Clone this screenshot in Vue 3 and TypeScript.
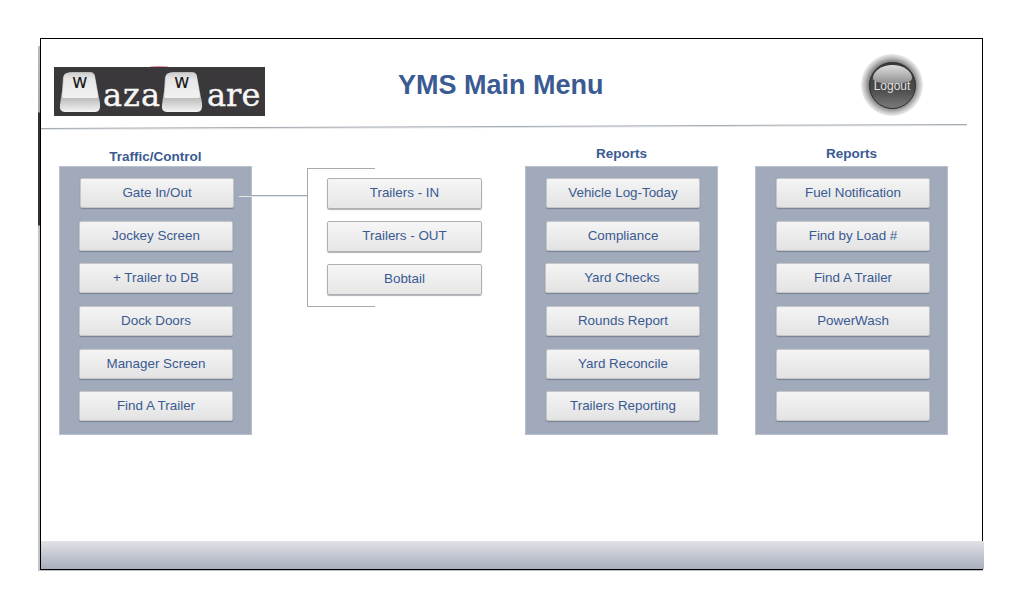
<script setup lang="ts">
const trafficControl: string[] = ['Gate In/Out', 'Jockey Screen', '+ Trailer to DB', 'Dock Doors', 'Manager Screen', 'Find A Trailer']
const gate: string[] = ['Trailers - IN', 'Trailers - OUT', 'Bobtail']
const reportsA: string[] = ['Vehicle Log-Today', 'Compliance', 'Yard Checks', 'Rounds Report', 'Yard Reconcile', 'Trailers Reporting']
const reportsB: string[] = ['Fuel Notification', 'Find by Load #', 'Find A Trailer', 'PowerWash', '', '']
</script>

<template>
  <div class="page">
    <div class="frame">
      <header class="header">
        <div class="logo">
          <svg class="key" viewBox="0 0 42 40" width="42" height="40">
            <defs>
              <linearGradient id="keyTop" x1="0" y1="0" x2="0" y2="1">
                <stop offset="0" stop-color="#cfcfcf" />
                <stop offset="0.25" stop-color="#e6e6e6" />
                <stop offset="1" stop-color="#f2f2f2" />
              </linearGradient>
              <linearGradient id="keyBase" x1="0" y1="0" x2="0" y2="1">
                <stop offset="0" stop-color="#bdbdbd" />
                <stop offset="0.6" stop-color="#b4b4b4" />
                <stop offset="1" stop-color="#f4f4f4" />
              </linearGradient>
            </defs>
            <path d="M8 1Q9 0 13 0H31Q35 0 36 4L41 31Q42 40 36 40H6Q0 40 1 33Q2 25 3 19L4 5Q5 2 8 1Z" fill="url(#keyBase)" />
            <path d="M9 1H32Q35 1 35.500 4L39 24Q39 26 36 26H6Q3 26 3.200 24L5 4Q5.500 1 9 1Z" fill="url(#keyTop)" />
            <text x="13" y="16" class="key-letter">w</text>
          </svg>
          <span class="logo-text first">aza</span>
          <svg class="key" viewBox="0 0 42 40" width="42" height="40">
            <path d="M8 1Q9 0 13 0H31Q35 0 36 4L41 31Q42 40 36 40H6Q0 40 1 33Q2 25 3 19L4 5Q5 2 8 1Z" fill="url(#keyBase)" />
            <path d="M9 1H32Q35 1 35.500 4L39 24Q39 26 36 26H6Q3 26 3.200 24L5 4Q5.500 1 9 1Z" fill="url(#keyTop)" />
            <text x="13" y="16" class="key-letter">w</text>
          </svg>
          <span class="logo-text second">are</span>
        </div>
        <h1 class="title">YMS Main Menu</h1>
        <button class="logout">
          <span class="logout-face"><span class="logout-label">Logout</span></span>
        </button>
      </header>
      <div class="rule"></div>

      <main class="columns">
        <section class="col col-traffic">
          <h2 class="col-title">Traffic/Control</h2>
          <div class="panel">
            <button v-for="b in trafficControl" :key="b" class="btn">{{ b }}</button>
          </div>
        </section>

        <section class="connector">
          <div class="stem"></div>
          <div class="bracket">
            <button v-for="b in gate" :key="b" class="btn sub">{{ b }}</button>
          </div>
        </section>

        <section class="col col-a">
          <h2 class="col-title">Reports</h2>
          <div class="panel">
            <button v-for="b in reportsA" :key="b" class="btn">{{ b }}</button>
          </div>
        </section>

        <section class="col col-b">
          <h2 class="col-title">Reports</h2>
          <div class="panel">
            <button v-for="(b, i) in reportsB" :key="i" class="btn">{{ b }}</button>
          </div>
        </section>
      </main>

      <footer class="footer"></footer>
    </div>
  </div>
</template>

<style>
html, body { margin: 0; background: #fff; }
</style>

<style scoped>
.page {
  width: 1022px;
  height: 599px;
  padding: 38px 0 0 40px;
  box-sizing: border-box;
  overflow: hidden;
  font-family: "Liberation Sans", Arial, sans-serif;
}
.frame {
  position: relative;
  width: 943px;
  height: 532px;
  box-sizing: border-box;
  border: 1px solid #000;
  background: #fff;
  display: flex;
  flex-direction: column;
  box-shadow: 0 1px 0 #bcbfc3;
}
.frame::before {
  content: "";
  position: absolute;
  left: -3px;
  top: 7px;
  bottom: -2px;
  width: 2px;
  background: linear-gradient(180deg, #bdbdbd 0, #a8a8a8 66px, #333 67px, #333 179px, #c4c4c4 180px, #c4c4c4 100%);
}
.header {
  height: 87px;
  display: flex;
  align-items: flex-start;
  flex: none;
}
.logo {
  position: relative;
  width: 211px;
  height: 49px;
  margin: 28px 0 0 13px;
  background: #3a383a;
  display: flex;
  align-items: center;
  padding-left: 5px;
  box-sizing: border-box;
  flex: none;
}
.logo::before {
  content: "";
  position: absolute;
  left: 96px;
  top: -1px;
  width: 18px;
  height: 1px;
  border-radius: 50% 50% 0 0;
  background: #e88a95;
}
.key { flex: none; overflow: visible; }
.key-letter {
  fill: #1c1c1c;
  font: 19px/1 "DejaVu Sans", sans-serif;
}
.logo-text {
  color: #f6f6f6;
  font: 32px/38px "DejaVu Serif", serif;
  -webkit-text-stroke: 0.4px #f6f6f6;
  padding-top: 6px;
  flex: none;
}
.first {
  width: 58px;
  margin-left: 2px;
  letter-spacing: 1px;
}
.second { margin-left: 4px; }
.title {
  width: 360px;
  margin: 29px 0 0 133px;
  color: #3a5a92;
  font: 700 27px/34px "Liberation Sans", sans-serif;
  text-align: left;
  flex: none;
}
.logout {
  width: 62px;
  height: 62px;
  margin: 15px 0 0 103px;
  padding: 0;
  border: 0;
  border-radius: 50%;
  background: radial-gradient(circle closest-side, #777 72%, #929292 78%, #c9c9c9 90%, #eeeeee 100%);
  display: flex;
  align-items: center;
  justify-content: center;
  flex: none;
}
.logout-face {
  position: relative;
  width: 47px;
  height: 47px;
  border-radius: 50%;
  box-sizing: border-box;
  border: 1px solid #2c2c2c;
  background: linear-gradient(180deg, #3a3a3a 0%, #4c4c4c 60%, #7a7a7a 100%);
  display: block;
}
.logout-face::before {
  content: "";
  position: absolute;
  left: 3px;
  top: 2px;
  width: 39px;
  height: 19px;
  border-radius: 50% 50% 45% 45% / 70% 70% 30% 30%;
  background: linear-gradient(180deg, #dedede 0%, #8e8e8e 100%);
}
.logout-label {
  position: relative;
  display: block;
  color: #e0e0e0;
  font: 12px/47px "Liberation Sans", sans-serif;
  text-align: center;
}
.rule {
  width: 926px;
  height: 1px;
  margin-bottom: 1px;
  background: #a3aab0;
  box-shadow: 0 1px 0 #e2e5e8;
  transform: rotate(-0.25deg);
  flex: none;
}
.columns {
  flex: 1;
  display: flex;
  align-items: flex-start;
}
.col { width: 193px; flex: none; }
.col-traffic { margin: 21px 0 0 18px; }
.col-a { margin: 18px 0 0 43px; }
.col-b { margin: 18px 0 0 37px; }
.col-title {
  margin: 0 0 5px;
  height: 15px;
  color: #3a5a92;
  font: 700 13.5px/15px "Liberation Sans", sans-serif;
  text-align: center;
}
.col-traffic .col-title { margin-bottom: 2px; }
.panel {
  height: 269px;
  box-sizing: border-box;
  background: #a0aaba;
  border: 1px solid #b7c0cc;
  padding: 11px 18px 0 19px;
  display: flex;
  flex-direction: column;
  gap: 12.7px;
}
.col-a .panel, .col-b .panel { padding-left: 20px; padding-right: 17px; }
.btn {
  height: 30px;
  flex: none;
  padding: 0;
  box-sizing: border-box;
  border: 1px solid #c6c6c6;
  border-radius: 2px;
  background: linear-gradient(180deg, #f4f4f4 0%, #e3e3e3 100%);
  box-shadow: 0 1px 1px rgba(70, 80, 100, .45);
  color: #3a5a92;
  font: 13.4px/28px "Liberation Sans", sans-serif;
  text-align: center;
}
.col-traffic .btn:first-child { margin-left: 1px; margin-right: -1px; }
.col-a .btn:nth-child(3) { margin-left: -1px; margin-right: 1px; }
.connector {
  width: 230px;
  flex: none;
  margin-top: 40px;
  display: flex;
  align-items: flex-start;
}
.stem {
  width: 68px;
  height: 1px;
  margin: 27px 0 0 -13px;
  background: #a3aab0;
  box-shadow: 0 1px 0 #e2e5e8;
  flex: none;
  position: relative;
}
.bracket {
  width: 68px;
  height: 139px;
  box-sizing: border-box;
  border: 1px solid #a3aab0;
  border-right: 0;
  padding: 9px 0 0 19px;
  display: flex;
  flex-direction: column;
  gap: 12.5px;
  flex: none;
}
.sub {
  width: 155px;
  height: 30.500px;
  border-color: #b0b0b0;
  background: linear-gradient(180deg, #f6f6f6 0%, #e6e6e6 100%);
}
.footer {
  height: 28px;
  margin-right: -2px;
  flex: none;
  background: linear-gradient(180deg, #e1e1e7 0%, #a9afbe 100%);
}
</style>
